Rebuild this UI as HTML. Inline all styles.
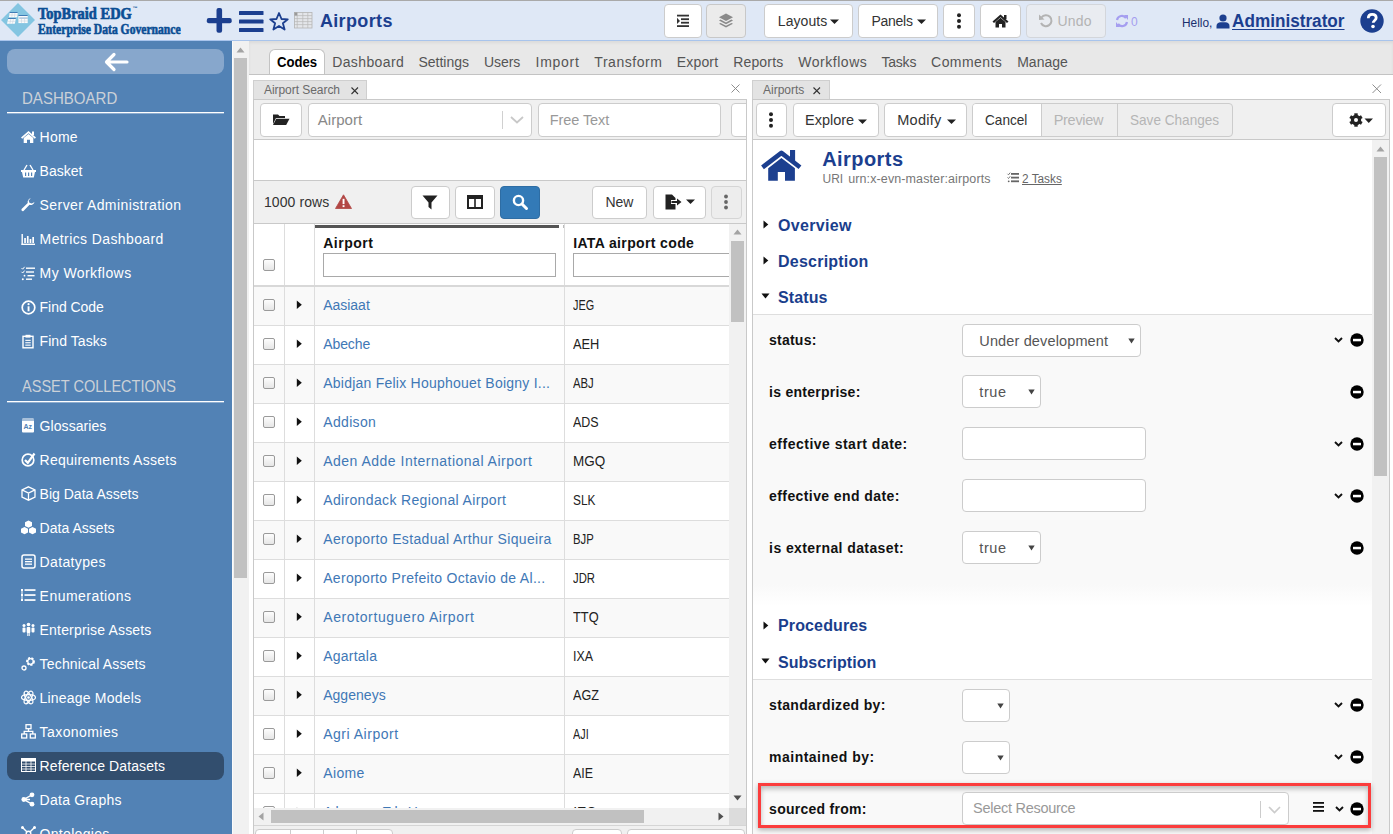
<!DOCTYPE html>
<html><head><meta charset="utf-8"><title>TopBraid EDG</title>
<style>
html,body{margin:0;padding:0;}
body{width:1393px;height:834px;overflow:hidden;position:relative;background:#fff;font-family:"Liberation Sans",sans-serif;}
svg{display:block;overflow:visible}
</style></head><body>
<div style="position:absolute;left:0px;top:0px;width:1393px;height:1px;background:#a9a9a9"></div>
<div style="position:absolute;left:0px;top:1px;width:1393px;height:39px;background:#dfe8f6"></div>
<div style="position:absolute;left:0px;top:40px;width:1393px;height:1px;background:#a8c4ec"></div>
<svg style="position:absolute;left:1px;top:3px;" width="34" height="34" viewBox="0 0 34 34"><polygon points="17,0 34,17 17,34 0,17" fill="#84c5e1"/><g fill="#fbfbfb"><polygon points="8.7,9.4 16.7,9.4 16.2,14.2 7.9,14.2"/><polygon points="7.2,15.5 14.9,15.5 13.8,20.8 6,20.8"/><rect x="17.4" y="12.3" width="9.3" height="7.8"/></g><g fill="#3f7bb5"><polygon points="8.7,9 16.7,9 16.65,9.9 8.6,9.9"/><polygon points="7.2,15.1 14.9,15.1 14.8,16 7.1,16"/><rect x="17.4" y="12" width="9.3" height="1"/><rect x="18.2" y="14.6" width="8.5" height="0.9" opacity="0.7"/></g><g stroke="#b9c9d8" stroke-width="0.45"><line x1="8.3" y1="12" x2="16.4" y2="12"/><line x1="11.2" y1="9.9" x2="10.8" y2="14.2"/><line x1="13.9" y1="9.9" x2="13.5" y2="14.2"/><line x1="6.6" y1="18.3" x2="14.3" y2="18.3"/><line x1="9.8" y1="16" x2="8.8" y2="20.8"/><line x1="12.4" y1="16" x2="11.4" y2="20.8"/><line x1="17.4" y1="18" x2="26.7" y2="18"/><line x1="20.5" y1="15.5" x2="20.5" y2="20.1"/><line x1="23.6" y1="15.5" x2="23.6" y2="20.1"/></g></svg>
<div style="position:absolute;left:37.5px;top:5.11px;font-size:17px;line-height:17px;color:#0b4e94;font-weight:bold;white-space:nowrap;font-family:'Liberation Serif',sans-serif;transform:scaleX(0.85);transform-origin:0 0;-webkit-text-stroke:0.7px #0b4e94;">TopBraid EDG</div>
<div style="position:absolute;left:132.5px;top:6.27px;font-size:5px;line-height:5px;color:#0b4e94;font-weight:bold;white-space:nowrap;font-family:'Liberation Sans',sans-serif;">™</div>
<div style="position:absolute;left:37.5px;top:22.95px;font-size:14px;line-height:14px;color:#0b4e94;font-weight:bold;white-space:nowrap;font-family:'Liberation Serif',sans-serif;transform:scaleX(0.83);transform-origin:0 0;-webkit-text-stroke:0.6px #0b4e94;">Enterprise Data Governance</div>
<svg style="position:absolute;left:206px;top:8px;" width="26" height="26" viewBox="0 0 26 26"><g fill="#1c3f8f"><rect x="10.5" y="0" width="5.6" height="24.7" rx="2"/><rect x="0.8" y="9.9" width="24.9" height="5.3" rx="2"/></g></svg>
<svg style="position:absolute;left:238px;top:10px;" width="26" height="24" viewBox="0 0 26 24"><g fill="#1c3f8f"><rect x="1" y="1" width="24.5" height="4" rx="0.6"/><rect x="1" y="9.6" width="24.5" height="4" rx="0.6"/><rect x="1" y="18.1" width="24.5" height="4" rx="0.6"/></g></svg>
<svg style="position:absolute;left:269px;top:12px;" width="20" height="19" viewBox="0 0 20 19"><polygon points="10,1 12.5,7 18.8,7.3 13.9,11.3 15.6,17.6 10,14 4.4,17.6 6.1,11.3 1.2,7.3 7.5,7" fill="none" stroke="#1c3f8f" stroke-width="1.8" stroke-linejoin="round"/></svg>
<svg style="position:absolute;left:294px;top:12px;" width="19" height="17" viewBox="0 0 19 17"><rect x="0.5" y="0.5" width="17.5" height="15.5" fill="#e4e6ea" stroke="#b4b4b4" stroke-width="0.8"/><g stroke="#b8b8b8" stroke-width="0.7"><line x1="0" y1="3.6" x2="18" y2="3.6"/><line x1="0" y1="6.6" x2="18" y2="6.6"/><line x1="0" y1="9.6" x2="18" y2="9.6"/><line x1="0" y1="12.6" x2="18" y2="12.6"/><line x1="3.2" y1="0" x2="3.2" y2="16"/><line x1="8.8" y1="0" x2="8.8" y2="16"/><line x1="13.8" y1="0" x2="13.8" y2="16"/></g><rect x="0.5" y="0.5" width="2.7" height="3" fill="#999"/></svg>
<div style="position:absolute;left:319.9px;top:12.06px;font-size:18px;line-height:18px;color:#1c3f8f;font-weight:bold;white-space:nowrap;font-family:'Liberation Sans',sans-serif;letter-spacing:0.357px;">Airports</div>
<div style="position:absolute;left:664px;top:4px;width:36px;height:32px;background:#fff;border:1px solid #ccc;border-radius:4px;"></div>
<svg style="position:absolute;left:676px;top:14px;" width="14" height="13" viewBox="0 0 14 13"><g fill="#333"><rect x="1" y="0.7" width="12" height="1.8"/><rect x="5" y="4.3" width="8" height="1.8"/><rect x="5" y="7.8" width="8" height="1.8"/><rect x="1" y="11.2" width="12" height="1.8"/><polygon points="1,3.8 4,6.9 1,10"/></g></svg>
<div style="position:absolute;left:706px;top:4px;width:38px;height:32px;background:#ebebeb;border:1px solid #c8c8c8;border-radius:4px;"></div>
<svg style="position:absolute;left:718px;top:13px;" width="16" height="16" viewBox="0 0 16 16"><g fill="#8a8a8a"><polygon points="8,0.5 15,4.2 8,7.9 1,4.2"/><path d="M2.6 6.6 L8 9.4 L13.4 6.6 L15 7.5 L8 11.2 L1 7.5 Z"/><path d="M2.6 9.9 L8 12.7 L13.4 9.9 L15 10.8 L8 14.5 L1 10.8 Z"/></g></svg>
<div style="position:absolute;left:764px;top:4px;width:87px;height:32px;background:#fff;border:1px solid #ccc;border-radius:4px;"></div>
<div style="position:absolute;left:777.8px;top:14.15px;font-size:14px;line-height:14px;color:#333;font-weight:normal;white-space:nowrap;font-family:'Liberation Sans',sans-serif;letter-spacing:0.083px;">Layouts</div>
<svg style="position:absolute;left:830px;top:19px;" width="10" height="6" viewBox="0 0 10 6"><polygon points="0,0.5 9,0.5 4.5,5" fill="#222"/></svg>
<div style="position:absolute;left:858px;top:4px;width:78px;height:32px;background:#fff;border:1px solid #ccc;border-radius:4px;"></div>
<div style="position:absolute;left:871.5px;top:14.15px;font-size:14px;line-height:14px;color:#333;font-weight:normal;white-space:nowrap;font-family:'Liberation Sans',sans-serif;letter-spacing:-0.280px;">Panels</div>
<svg style="position:absolute;left:917px;top:19px;" width="10" height="6" viewBox="0 0 10 6"><polygon points="0,0.5 9,0.5 4.5,5" fill="#222"/></svg>
<div style="position:absolute;left:943px;top:4px;width:30px;height:32px;background:#fff;border:1px solid #ccc;border-radius:4px;"></div>
<svg style="position:absolute;left:954px;top:13px;" width="10" height="16" viewBox="0 0 10 16"><g fill="#222"><circle cx="5" cy="2.3" r="2"/><circle cx="5" cy="8" r="2"/><circle cx="5" cy="13.7" r="2"/></g></svg>
<div style="position:absolute;left:980px;top:4px;width:39px;height:32px;background:#fff;border:1px solid #ccc;border-radius:4px;"></div>
<svg style="position:absolute;left:992px;top:14px;" width="17" height="14" viewBox="0 0 17 14"><g fill="#222"><polygon points="8.5,0.5 16.5,7.5 15,9 8.5,3.3 2,9 0.5,7.5"/><rect x="12" y="1" width="2.5" height="4"/><path d="M3.5 8 L8.5 3.8 L13.5 8 V13.5 H10 V10 H7 V13.5 H3.5 Z"/></g></svg>
<div style="position:absolute;left:1026px;top:4px;width:78px;height:32px;background:#e9ecf1;border:1px solid #d3d6db;border-radius:4px;"></div>
<svg style="position:absolute;left:1038px;top:13px;" width="15" height="15" viewBox="0 0 15 15"><path d="M3.5 4.5 A5.5 5.5 0 1 1 3 10" fill="none" stroke="#b3b3b3" stroke-width="2"/><polygon points="1,1.5 6.5,6.5 1,7" fill="#b3b3b3"/></svg>
<div style="position:absolute;left:1057.6px;top:14.15px;font-size:14px;line-height:14px;color:#b3b3b3;font-weight:normal;white-space:nowrap;font-family:'Liberation Sans',sans-serif;letter-spacing:0.167px;">Undo</div>
<svg style="position:absolute;left:1115px;top:14px;" width="14" height="14" viewBox="0 0 14 14"><g fill="none" stroke="#a59ef0" stroke-width="2.2"><path d="M2 6 A5 5 0 0 1 11 4"/><path d="M12 8 A5 5 0 0 1 3 10"/></g><g fill="#a59ef0"><polygon points="9,1 13,1 13,6"/><polygon points="1,8 5,13 1,13"/></g></svg>
<div style="position:absolute;left:1131px;top:16.34px;font-size:12px;line-height:12px;color:#a59ef0;font-weight:normal;white-space:nowrap;font-family:'Liberation Sans',sans-serif;">0</div>
<div style="position:absolute;left:1182.2px;top:15.50px;font-size:13px;line-height:13px;color:#1a2f6e;font-weight:normal;white-space:nowrap;font-family:'Liberation Sans',sans-serif;transform:scaleX(0.9152);transform-origin:0 0;">Hello,</div>
<svg style="position:absolute;left:1216px;top:14px;" width="14" height="15" viewBox="0 0 14 15"><g fill="#1c3f8f"><circle cx="7" cy="4" r="3.6"/><path d="M0.5 14.5 V12 C0.5 9.5 2.5 8.3 4.5 8.3 H9.5 C11.5 8.3 13.5 9.5 13.5 12 V14.5 Z"/></g></svg>
<div style="position:absolute;left:1232.0px;top:11.76px;font-size:18px;line-height:18px;color:#1c3f8f;font-weight:bold;white-space:nowrap;font-family:'Liberation Sans',sans-serif;transform:scaleX(0.9534);transform-origin:0 0;text-decoration:underline;text-underline-offset:1.5px;text-decoration-thickness:1.3px;">Administrator</div>
<svg style="position:absolute;left:1360px;top:9px;" width="24" height="24" viewBox="0 0 24 24"><circle cx="12" cy="12" r="11.7" fill="#1c3f8f"/><path d="M8.3 9.2 C8.3 6.5 10 5.3 12.2 5.3 C14.6 5.3 16.2 6.8 16.2 8.8 C16.2 11.5 13.2 11.5 13.2 13.8" fill="none" stroke="#fff" stroke-width="2.8"/><circle cx="13" cy="17.5" r="1.8" fill="#fff"/></svg>
<div style="position:absolute;left:0px;top:41px;width:232px;height:793px;background:#5282b5"></div>
<div style="position:absolute;left:7px;top:49px;width:217px;height:25px;background:#87a7cc;border-radius:8px"></div>
<svg style="position:absolute;left:103px;top:52px;" width="26" height="20" viewBox="0 0 26 20"><path d="M24 10 H4 M11 2.5 L3.5 10 L11 17.5" fill="none" stroke="#fff" stroke-width="3.2" stroke-linecap="round" stroke-linejoin="round"/></svg>
<div style="position:absolute;left:22px;top:89.61px;font-size:17px;line-height:17px;color:#cbd1d8;font-weight:normal;white-space:nowrap;font-family:'Liberation Sans',sans-serif;transform:scaleX(0.885);transform-origin:0 0;">DASHBOARD</div>
<div style="position:absolute;left:7px;top:112px;width:217px;height:1px;background:#fff"></div>
<div style="position:absolute;left:7px;top:113px;width:217px;height:1px;background:rgba(255,255,255,0.35)"></div>
<svg style="position:absolute;left:21.2px;top:129.7px;" width="15" height="15" viewBox="0 0 15 15"><g fill="#fff"><polygon points="7.5,1 15,7.5 13.8,8.7 7.5,3.3 1.2,8.7 0,7.5"/><rect x="11" y="1.5" width="2" height="3.5"/><path d="M2.7 8 L7.5 4 L12.3 8 V13 H9 V9.8 H6 V13 H2.7 Z"/></g></svg>
<div style="position:absolute;left:39.6px;top:130.15px;font-size:14px;line-height:14px;color:#fff;font-weight:normal;white-space:nowrap;font-family:'Liberation Sans',sans-serif;letter-spacing:0.233px;">Home</div>
<svg style="position:absolute;left:21.2px;top:163.7px;" width="15" height="15" viewBox="0 0 15 15"><g fill="#fff"><path d="M0 6 H15 V8 H14 L12.8 13.5 H2.2 L1 8 H0 Z"/><path d="M3 6 L6 1 M12 6 L9 1" stroke="#fff" stroke-width="1.4"/></g><g fill="#5282b5"><rect x="4" y="8.5" width="1.2" height="3.5"/><rect x="7" y="8.5" width="1.2" height="3.5"/><rect x="10" y="8.5" width="1.2" height="3.5"/></g></svg>
<div style="position:absolute;left:39.6px;top:164.15px;font-size:14px;line-height:14px;color:#fff;font-weight:normal;white-space:nowrap;font-family:'Liberation Sans',sans-serif;letter-spacing:-0.000px;">Basket</div>
<svg style="position:absolute;left:21.2px;top:197.7px;" width="15" height="15" viewBox="0 0 15 15"><path d="M13.5 4 A4 4 0 0 1 8.5 6.8 L2.5 13 A1.4 1.4 0 0 1 0.6 11.1 L6.7 5 A4 4 0 0 1 9.8 0.2 L7.6 2.5 L8.4 4.8 L10.8 5.6 Z" fill="#fff"/></svg>
<div style="position:absolute;left:39.6px;top:198.15px;font-size:14px;line-height:14px;color:#fff;font-weight:normal;white-space:nowrap;font-family:'Liberation Sans',sans-serif;letter-spacing:0.420px;">Server Administration</div>
<svg style="position:absolute;left:21.2px;top:231.7px;" width="15" height="15" viewBox="0 0 15 15"><g fill="#fff"><rect x="0.5" y="2" width="1.4" height="11"/><rect x="0.5" y="11.6" width="13.5" height="1.4"/><rect x="3.2" y="6" width="1.7" height="5"/><rect x="5.9" y="4" width="1.7" height="7"/><rect x="8.6" y="7" width="1.7" height="4"/><rect x="11.3" y="5" width="1.7" height="6"/></g></svg>
<div style="position:absolute;left:39.6px;top:232.15px;font-size:14px;line-height:14px;color:#fff;font-weight:normal;white-space:nowrap;font-family:'Liberation Sans',sans-serif;letter-spacing:0.394px;">Metrics Dashboard</div>
<svg style="position:absolute;left:21.2px;top:265.7px;" width="15" height="15" viewBox="0 0 15 15"><g fill="#fff"><rect x="5" y="1.5" width="9" height="1.4"/><rect x="5" y="5.3" width="8" height="1.4"/><rect x="6.5" y="9" width="7" height="1.4"/><rect x="5" y="12.5" width="6" height="1.4"/><circle cx="1.8" cy="13.2" r="1"/><circle cx="3.5" cy="9.7" r="0.9"/></g><path d="M0.5 2 L1.7 3.2 L3.6 0.8 M0.5 5.8 L1.7 7 L3.6 4.6" fill="none" stroke="#fff" stroke-width="1"/></svg>
<div style="position:absolute;left:39.6px;top:266.15px;font-size:14px;line-height:14px;color:#fff;font-weight:normal;white-space:nowrap;font-family:'Liberation Sans',sans-serif;letter-spacing:0.427px;">My Workflows</div>
<svg style="position:absolute;left:21.2px;top:299.7px;" width="15" height="15" viewBox="0 0 15 15"><circle cx="7.5" cy="7.5" r="6.3" fill="none" stroke="#fff" stroke-width="1.7"/><rect x="6.6" y="6.3" width="1.9" height="5" fill="#fff"/><circle cx="7.55" cy="4.2" r="1.1" fill="#fff"/></svg>
<div style="position:absolute;left:39.6px;top:300.15px;font-size:14px;line-height:14px;color:#fff;font-weight:normal;white-space:nowrap;font-family:'Liberation Sans',sans-serif;letter-spacing:-0.050px;">Find Code</div>
<svg style="position:absolute;left:21.2px;top:333.7px;" width="15" height="15" viewBox="0 0 15 15"><rect x="2" y="2.3" width="10" height="11.5" fill="none" stroke="#fff" stroke-width="1.4"/><rect x="4.5" y="0.8" width="5" height="2.8" fill="#fff"/><g fill="#fff"><rect x="4.3" y="5.8" width="5.4" height="1.1"/><rect x="4.3" y="8.2" width="5.4" height="1.1"/><rect x="4.3" y="10.6" width="5.4" height="1.1"/></g></svg>
<div style="position:absolute;left:39.6px;top:334.15px;font-size:14px;line-height:14px;color:#fff;font-weight:normal;white-space:nowrap;font-family:'Liberation Sans',sans-serif;letter-spacing:0.056px;">Find Tasks</div>
<div style="position:absolute;left:21.5px;top:378.31px;font-size:17px;line-height:17px;color:#cbd1d8;font-weight:normal;white-space:nowrap;font-family:'Liberation Sans',sans-serif;transform:scaleX(0.855);transform-origin:0 0;">ASSET COLLECTIONS</div>
<div style="position:absolute;left:7px;top:401px;width:217px;height:1px;background:#fff"></div>
<div style="position:absolute;left:7px;top:402px;width:217px;height:1px;background:rgba(255,255,255,0.35)"></div>
<div style="position:absolute;left:7px;top:752px;width:217px;height:28px;background:#324e6e;border-radius:8px"></div>
<svg style="position:absolute;left:21.2px;top:418.3px;" width="15" height="15" viewBox="0 0 15 15"><rect x="1" y="0.5" width="12" height="14" rx="1" fill="#fff"/><rect x="1" y="1.5" width="12" height="1" fill="#5282b5"/><text x="2.5" y="11" font-size="7" font-family="Liberation Sans" fill="#5282b5" font-weight="bold">Az</text></svg>
<div style="position:absolute;left:39.6px;top:418.75px;font-size:14px;line-height:14px;color:#fff;font-weight:normal;white-space:nowrap;font-family:'Liberation Sans',sans-serif;letter-spacing:0.067px;">Glossaries</div>
<svg style="position:absolute;left:21.2px;top:452.3px;" width="15" height="15" viewBox="0 0 15 15"><circle cx="7" cy="8" r="5.8" fill="none" stroke="#fff" stroke-width="1.7"/><path d="M4 8 L6.8 10.8 L13.5 1.5" fill="none" stroke="#fff" stroke-width="2.2"/></svg>
<div style="position:absolute;left:39.6px;top:452.75px;font-size:14px;line-height:14px;color:#fff;font-weight:normal;white-space:nowrap;font-family:'Liberation Sans',sans-serif;letter-spacing:0.250px;">Requirements Assets</div>
<svg style="position:absolute;left:21.2px;top:486.3px;" width="15" height="15" viewBox="0 0 15 15"><path d="M7.5 0.8 L14 3.8 V11 L7.5 14.2 L1 11 V3.8 Z M1 3.8 L7.5 7 L14 3.8 M7.5 7 V14.2" fill="none" stroke="#fff" stroke-width="1.3"/></svg>
<div style="position:absolute;left:39.6px;top:486.75px;font-size:14px;line-height:14px;color:#fff;font-weight:normal;white-space:nowrap;font-family:'Liberation Sans',sans-serif;letter-spacing:0.007px;">Big Data Assets</div>
<svg style="position:absolute;left:21.2px;top:520.3000000000001px;" width="15" height="15" viewBox="0 0 15 15"><g fill="#fff"><polygon points="7.5,0.5 11,2.2 11,6 7.5,7.7 4,6 4,2.2"/><polygon points="3.5,7 7,8.7 7,12.5 3.5,14.2 0,12.5 0,8.7"/><polygon points="11.5,7 15,8.7 15,12.5 11.5,14.2 8,12.5 8,8.7"/></g></svg>
<div style="position:absolute;left:39.6px;top:520.75px;font-size:14px;line-height:14px;color:#fff;font-weight:normal;white-space:nowrap;font-family:'Liberation Sans',sans-serif;letter-spacing:0.030px;">Data Assets</div>
<svg style="position:absolute;left:21.2px;top:554.3000000000001px;" width="15" height="15" viewBox="0 0 15 15"><rect x="1" y="1" width="13" height="13" rx="2" fill="none" stroke="#fff" stroke-width="1.5"/><g fill="#fff"><rect x="4" y="4.5" width="7" height="1.3"/><rect x="4" y="7" width="7" height="1.3"/><rect x="4" y="9.5" width="7" height="1.3"/></g></svg>
<div style="position:absolute;left:39.6px;top:554.75px;font-size:14px;line-height:14px;color:#fff;font-weight:normal;white-space:nowrap;font-family:'Liberation Sans',sans-serif;letter-spacing:0.350px;">Datatypes</div>
<svg style="position:absolute;left:21.2px;top:588.3000000000001px;" width="15" height="15" viewBox="0 0 15 15"><g fill="#fff"><rect x="0" y="1" width="2" height="2"/><rect x="0" y="6" width="2" height="2"/><rect x="0" y="11" width="2" height="2"/><rect x="3.5" y="1.2" width="11" height="1.7"/><rect x="3.5" y="6.2" width="11" height="1.7"/><rect x="3.5" y="11.2" width="11" height="1.7"/><rect x="0.5" y="3" width="1" height="8"/></g></svg>
<div style="position:absolute;left:39.6px;top:588.75px;font-size:14px;line-height:14px;color:#fff;font-weight:normal;white-space:nowrap;font-family:'Liberation Sans',sans-serif;letter-spacing:0.464px;">Enumerations</div>
<svg style="position:absolute;left:21.2px;top:622.3000000000001px;" width="15" height="15" viewBox="0 0 15 15"><g fill="#fff"><circle cx="7.5" cy="2.5" r="1.8"/><circle cx="3" cy="3.5" r="1.5"/><circle cx="12" cy="3.5" r="1.5"/><rect x="5.7" y="5" width="3.6" height="6" rx="1"/><rect x="1.5" y="5.5" width="3" height="5" rx="1"/><rect x="10.5" y="5.5" width="3" height="5" rx="1"/><rect x="6.3" y="10" width="1" height="4"/><rect x="7.7" y="10" width="1" height="4"/></g></svg>
<div style="position:absolute;left:39.6px;top:622.75px;font-size:14px;line-height:14px;color:#fff;font-weight:normal;white-space:nowrap;font-family:'Liberation Sans',sans-serif;letter-spacing:0.175px;">Enterprise Assets</div>
<svg style="position:absolute;left:21.2px;top:656.3000000000001px;" width="15" height="15" viewBox="0 0 15 15"><circle cx="9.5" cy="5.5" r="3.3" fill="none" stroke="#fff" stroke-width="2.2" stroke-dasharray="2 1.2"/><circle cx="9.5" cy="5.5" r="2.8" fill="none" stroke="#fff" stroke-width="1.2"/><circle cx="3" cy="12" r="2" fill="none" stroke="#fff" stroke-width="1.3"/></svg>
<div style="position:absolute;left:39.6px;top:656.75px;font-size:14px;line-height:14px;color:#fff;font-weight:normal;white-space:nowrap;font-family:'Liberation Sans',sans-serif;letter-spacing:0.167px;">Technical Assets</div>
<svg style="position:absolute;left:21.2px;top:690.3000000000001px;" width="15" height="15" viewBox="0 0 15 15"><g fill="none" stroke="#fff" stroke-width="1.2"><ellipse cx="7.5" cy="7.5" rx="7" ry="2.8"/><ellipse cx="7.5" cy="7.5" rx="7" ry="2.8" transform="rotate(60 7.5 7.5)"/><ellipse cx="7.5" cy="7.5" rx="7" ry="2.8" transform="rotate(-60 7.5 7.5)"/></g><circle cx="7.5" cy="7.5" r="1.3" fill="#fff"/></svg>
<div style="position:absolute;left:39.6px;top:690.75px;font-size:14px;line-height:14px;color:#fff;font-weight:normal;white-space:nowrap;font-family:'Liberation Sans',sans-serif;letter-spacing:0.192px;">Lineage Models</div>
<svg style="position:absolute;left:21.2px;top:724.3000000000001px;" width="15" height="15" viewBox="0 0 15 15"><g fill="none" stroke="#fff" stroke-width="1.3"><rect x="5" y="0.7" width="5" height="4"/><rect x="0.7" y="10" width="5" height="4"/><rect x="9.3" y="10" width="5" height="4"/><path d="M7.5 4.7 V7.3 H3.2 V10 M7.5 7.3 H11.8 V10"/></g></svg>
<div style="position:absolute;left:39.6px;top:724.75px;font-size:14px;line-height:14px;color:#fff;font-weight:normal;white-space:nowrap;font-family:'Liberation Sans',sans-serif;letter-spacing:0.422px;">Taxonomies</div>
<svg style="position:absolute;left:21.2px;top:758.3000000000001px;" width="15" height="15" viewBox="0 0 15 15"><rect x="0.5" y="0.5" width="14" height="13" fill="none" stroke="#fff" stroke-width="1"/><rect x="0.5" y="0.5" width="14" height="3" fill="#fff"/><g stroke="#fff" stroke-width="0.8"><line x1="0" y1="6" x2="15" y2="6"/><line x1="0" y1="8.5" x2="15" y2="8.5"/><line x1="0" y1="11" x2="15" y2="11"/><line x1="5" y1="0" x2="5" y2="14"/><line x1="10" y1="0" x2="10" y2="14"/></g></svg>
<div style="position:absolute;left:39.6px;top:758.75px;font-size:14px;line-height:14px;color:#fff;font-weight:normal;white-space:nowrap;font-family:'Liberation Sans',sans-serif;letter-spacing:0.100px;">Reference Datasets</div>
<svg style="position:absolute;left:21.2px;top:792.3000000000001px;" width="15" height="15" viewBox="0 0 15 15"><g fill="#fff"><circle cx="11" cy="2.8" r="2.4"/><circle cx="2.8" cy="7.5" r="2.4"/><circle cx="11" cy="12.2" r="2.4"/></g><path d="M11 2.8 L2.8 7.5 L11 12.2 M2.8 7.5 H9" stroke="#fff" stroke-width="1.4" fill="none"/></svg>
<div style="position:absolute;left:39.6px;top:792.75px;font-size:14px;line-height:14px;color:#fff;font-weight:normal;white-space:nowrap;font-family:'Liberation Sans',sans-serif;letter-spacing:0.250px;">Data Graphs</div>
<svg style="position:absolute;left:21.2px;top:826.3000000000001px;" width="15" height="15" viewBox="0 0 15 15"><g fill="none" stroke="#fff" stroke-width="1.4"><circle cx="7.5" cy="7.5" r="2.3"/><path d="M1 1 L5.8 5.8 M14 1 L9.2 5.8 M1 14 L5.8 9.2 M14 14 L9.2 9.2"/></g><g fill="#fff"><circle cx="1.5" cy="1.5" r="1.5"/><circle cx="13.5" cy="1.5" r="1.5"/></g></svg>
<div style="position:absolute;left:39.6px;top:826.75px;font-size:14px;line-height:14px;color:#fff;font-weight:normal;white-space:nowrap;font-family:'Liberation Sans',sans-serif;letter-spacing:0.300px;">Ontologies</div>
<div style="position:absolute;left:232px;top:41px;width:17px;height:793px;background:#f1f1f1"></div>
<div style="position:absolute;left:232px;top:41px;width:1px;height:793px;background:#fbfbfb"></div>
<svg style="position:absolute;left:236px;top:47px;" width="9" height="6" viewBox="0 0 9 6"><polygon points="0.5,5.5 4.5,0.5 8.5,5.5" fill="#a3a3a3"/></svg>
<div style="position:absolute;left:234px;top:58px;width:13px;height:520px;background:#c1c1c1"></div>
<div style="position:absolute;left:249px;top:41px;width:1144px;height:33px;background:#e8e8e8;box-shadow:inset 0 2px 3px rgba(0,0,0,0.06)"></div>
<div style="position:absolute;left:249px;top:74px;width:1144px;height:1px;background:#c3c3c3"></div>
<div style="position:absolute;left:269px;top:49px;width:54px;height:24px;background:#fff;border:1px solid #c3c3c3;border-bottom:none;border-radius:6px 6px 0 0"></div>
<div style="position:absolute;left:276.9px;top:55.15px;font-size:14px;line-height:14px;color:#000;font-weight:bold;white-space:nowrap;font-family:'Liberation Sans',sans-serif;transform:scaleX(0.9372);transform-origin:0 0;">Codes</div>
<div style="position:absolute;left:332.2px;top:55.15px;font-size:14px;line-height:14px;color:#555;font-weight:normal;white-space:nowrap;font-family:'Liberation Sans',sans-serif;letter-spacing:0.388px;">Dashboard</div>
<div style="position:absolute;left:418.4px;top:55.15px;font-size:14px;line-height:14px;color:#555;font-weight:normal;white-space:nowrap;font-family:'Liberation Sans',sans-serif;letter-spacing:0.000px;">Settings</div>
<div style="position:absolute;left:484px;top:55.15px;font-size:14px;line-height:14px;color:#555;font-weight:normal;white-space:nowrap;font-family:'Liberation Sans',sans-serif;letter-spacing:-0.075px;">Users</div>
<div style="position:absolute;left:535.5px;top:55.15px;font-size:14px;line-height:14px;color:#555;font-weight:normal;white-space:nowrap;font-family:'Liberation Sans',sans-serif;letter-spacing:0.740px;">Import</div>
<div style="position:absolute;left:594.3px;top:55.15px;font-size:14px;line-height:14px;color:#555;font-weight:normal;white-space:nowrap;font-family:'Liberation Sans',sans-serif;letter-spacing:0.550px;">Transform</div>
<div style="position:absolute;left:676.8px;top:55.15px;font-size:14px;line-height:14px;color:#555;font-weight:normal;white-space:nowrap;font-family:'Liberation Sans',sans-serif;letter-spacing:0.160px;">Export</div>
<div style="position:absolute;left:733.2px;top:55.15px;font-size:14px;line-height:14px;color:#555;font-weight:normal;white-space:nowrap;font-family:'Liberation Sans',sans-serif;letter-spacing:0.167px;">Reports</div>
<div style="position:absolute;left:798.2px;top:55.15px;font-size:14px;line-height:14px;color:#555;font-weight:normal;white-space:nowrap;font-family:'Liberation Sans',sans-serif;letter-spacing:0.537px;">Workflows</div>
<div style="position:absolute;left:881.5px;top:55.15px;font-size:14px;line-height:14px;color:#555;font-weight:normal;white-space:nowrap;font-family:'Liberation Sans',sans-serif;letter-spacing:-0.225px;">Tasks</div>
<div style="position:absolute;left:931.1px;top:55.15px;font-size:14px;line-height:14px;color:#555;font-weight:normal;white-space:nowrap;font-family:'Liberation Sans',sans-serif;letter-spacing:0.429px;">Comments</div>
<div style="position:absolute;left:1017.2px;top:55.15px;font-size:14px;line-height:14px;color:#555;font-weight:normal;white-space:nowrap;font-family:'Liberation Sans',sans-serif;letter-spacing:0.020px;">Manage</div>
<svg style="position:absolute;left:731px;top:84px;" width="9" height="9" viewBox="0 0 9 9"><path d="M0.5 0.5 L8.5 8.5 M8.5 0.5 L0.5 8.5" stroke="#888" stroke-width="0.95"/></svg>
<div style="position:absolute;left:253px;top:80px;width:113px;height:20px;background:#e3e3e3;border:1px solid #cfcfcf;border-bottom:none;box-sizing:border-box;width:114px"></div>
<div style="position:absolute;left:264px;top:83.64px;font-size:12px;line-height:12px;color:#6a6a6a;font-weight:normal;white-space:nowrap;font-family:'Liberation Sans',sans-serif;letter-spacing:-0.054px;">Airport Search</div>
<svg style="position:absolute;left:350.5px;top:87px;" width="7.5" height="7.5" viewBox="0 0 7.5 7.5"><path d="M0.5 0.5 L7.0 7.0 M7.0 0.5 L0.5 7.0" stroke="#333" stroke-width="1.1"/></svg>
<div style="position:absolute;left:253px;top:99px;width:494px;height:735px;border-left:1px solid #c9c9c9;border-right:1px solid #c9c9c9;box-sizing:border-box"></div>
<div style="position:absolute;left:254px;top:99px;width:492px;height:41px;background:#f0f0f0;border-top:1px solid #c9c9c9;border-bottom:1px solid #c9c9c9;box-sizing:border-box"></div>
<div style="position:absolute;left:260px;top:103px;width:40px;height:32px;background:#fff;border:1px solid #ccc;border-radius:4px;"></div>
<svg style="position:absolute;left:272px;top:113px;" width="18" height="13" viewBox="0 0 18 13"><path d="M1 1.5 H6 L7.5 3 H13 V5 H4 L1 11 Z" fill="#222"/><path d="M4.2 5.8 H17.5 L14.2 12 H1 Z" fill="#222"/></svg>
<div style="position:absolute;left:307.5px;top:103px;width:222.5px;height:32px;background:#fff;border:1px solid #ccc;border-radius:4px;"></div>
<div style="position:absolute;left:317.8px;top:112.30px;font-size:15px;line-height:15px;color:#888;font-weight:normal;white-space:nowrap;font-family:'Liberation Sans',sans-serif;letter-spacing:0.033px;">Airport</div>
<div style="position:absolute;left:502px;top:111px;width:1px;height:18px;background:#d0d0d0"></div>
<svg style="position:absolute;left:510px;top:116px;" width="14" height="8" viewBox="0 0 14 8"><path d="M1 1 L7 6.5 L13 1" fill="none" stroke="#c8c8c8" stroke-width="1.8"/></svg>
<div style="position:absolute;left:537.5px;top:103px;width:181.5px;height:32px;background:#fff;border:1px solid #ccc;border-radius:4px;"></div>
<div style="position:absolute;left:549.8px;top:112.73px;font-size:14.5px;line-height:14.5px;color:#999;font-weight:normal;white-space:nowrap;font-family:'Liberation Sans',sans-serif;letter-spacing:-0.100px;">Free Text</div>
<div style="position:absolute;left:731px;top:103px;width:27px;height:32px;background:#fff;border:1px solid #ccc;border-radius:4px;"></div>
<div style="position:absolute;left:746px;top:99px;width:6px;height:50px;background:#fff"></div>
<div style="position:absolute;left:746px;top:99px;width:1px;height:735px;background:#c9c9c9"></div>
<div style="position:absolute;left:254px;top:180px;width:492px;height:44px;background:#f0f0f0;border-top:1px solid #c9c9c9;border-bottom:1px solid #c9c9c9;box-sizing:border-box"></div>
<div style="position:absolute;left:264px;top:194.95px;font-size:14px;line-height:14px;color:#333;font-weight:normal;white-space:nowrap;font-family:'Liberation Sans',sans-serif;letter-spacing:0.087px;">1000 rows</div>
<svg style="position:absolute;left:335px;top:194px;" width="17" height="15" viewBox="0 0 17 15"><path d="M8.5 0.8 L16.5 14.5 H0.5 Z" fill="#b24745" stroke="#b24745" stroke-width="0.8" stroke-linejoin="round"/><rect x="7.6" y="4.8" width="1.9" height="5.3" fill="#fff"/><rect x="7.6" y="11.2" width="1.9" height="1.9" fill="#fff"/></svg>
<div style="position:absolute;left:410.5px;top:185.5px;width:37.5px;height:31.5px;background:#fff;border:1px solid #ccc;border-radius:4px;"></div>
<svg style="position:absolute;left:422px;top:195px;" width="16" height="15" viewBox="0 0 16 15"><path d="M0.5 0.5 H15.5 L9.5 7.5 V14.5 L6.5 12 V7.5 Z" fill="#222"/></svg>
<div style="position:absolute;left:455.3px;top:185.5px;width:37.69999999999999px;height:31.5px;background:#fff;border:1px solid #ccc;border-radius:4px;"></div>
<svg style="position:absolute;left:467px;top:195px;" width="16" height="14" viewBox="0 0 16 14"><rect x="1" y="1" width="14" height="12" fill="none" stroke="#222" stroke-width="2"/><rect x="1" y="1" width="14" height="3" fill="#222"/><rect x="7.2" y="1" width="1.6" height="12" fill="#222"/></svg>
<div style="position:absolute;left:500.3px;top:185.5px;width:37.69999999999999px;height:31.5px;background:#337ab7;border:1px solid #2e6da4;border-radius:4px;"></div>
<svg style="position:absolute;left:512px;top:194px;" width="16" height="16" viewBox="0 0 16 16"><circle cx="6.5" cy="6.5" r="4.6" fill="none" stroke="#fff" stroke-width="2.4"/><path d="M10 10 L14.5 14.5" stroke="#fff" stroke-width="3" stroke-linecap="round"/></svg>
<div style="position:absolute;left:592.4px;top:185.5px;width:52.60000000000002px;height:31.5px;background:#fff;border:1px solid #ccc;border-radius:4px;"></div>
<div style="position:absolute;left:605.6px;top:195.15px;font-size:14px;line-height:14px;color:#333;font-weight:normal;white-space:nowrap;font-family:'Liberation Sans',sans-serif;letter-spacing:-0.150px;">New</div>
<div style="position:absolute;left:652.5px;top:185.5px;width:51.5px;height:31.5px;background:#fff;border:1px solid #ccc;border-radius:4px;"></div>
<svg style="position:absolute;left:665px;top:194px;" width="18" height="16" viewBox="0 0 18 16"><path d="M0.5 0.5 H7 L10.5 4 V6 H6 V10 H10.5 V15.5 H0.5 Z" fill="#222"/><path d="M6.5 7 H12 V4.5 L16.5 8 L12 11.5 V9 H6.5 Z" fill="#222"/></svg>
<svg style="position:absolute;left:686px;top:199px;" width="10" height="6" viewBox="0 0 10 6"><polygon points="0,0.5 9,0.5 4.5,5" fill="#222"/></svg>
<div style="position:absolute;left:711.3px;top:185.5px;width:28.700000000000045px;height:31.5px;background:#ededed;border:1px solid #d5d5d5;border-radius:4px;"></div>
<svg style="position:absolute;left:722px;top:194px;" width="8" height="16" viewBox="0 0 8 16"><g fill="#666"><circle cx="4" cy="2.5" r="1.9"/><circle cx="4" cy="8" r="1.9"/><circle cx="4" cy="13.5" r="1.9"/></g></svg>
<div style="position:absolute;left:254px;top:224px;width:475px;height:584px;background:#fff;overflow:hidden"></div>
<div style="position:absolute;left:284px;top:224px;width:1px;height:62px;background:#dddddd"></div>
<div style="position:absolute;left:314px;top:224px;width:1px;height:62px;background:#dddddd"></div>
<div style="position:absolute;left:564px;top:224px;width:1px;height:62px;background:#dddddd"></div>
<div style="position:absolute;left:315px;top:225px;width:244px;height:3px;background:#555"></div>
<div style="position:absolute;left:563px;top:225px;width:1px;height:3px;background:#bbb"></div>
<div style="position:absolute;left:263px;top:259px;width:10px;height:10px;border:1px solid #9a9a9a;border-radius:2px;background:linear-gradient(#fdfdfd,#e6e6e6)"></div>
<div style="position:absolute;left:323.2px;top:236.15px;font-size:14px;line-height:14px;color:#111;font-weight:bold;white-space:nowrap;font-family:'Liberation Sans',sans-serif;letter-spacing:0.500px;">Airport</div>
<div style="position:absolute;left:323px;top:253px;width:231px;height:22px;border:1px solid #a9a9a9;background:#fff"></div>
<div style="position:absolute;left:573.2px;top:236.15px;font-size:14px;line-height:14px;color:#111;font-weight:bold;white-space:nowrap;font-family:'Liberation Sans',sans-serif;letter-spacing:0.362px;">IATA airport code</div>
<div style="position:absolute;left:573px;top:253px;width:160px;height:22px;border:1px solid #a9a9a9;background:#fff"></div>
<div style="position:absolute;left:254px;top:285px;width:475px;height:2px;background:#d8d8d8"></div>
<div style="position:absolute;left:254px;top:287px;width:475px;height:38px;background:#f9f9f9"></div>
<div style="position:absolute;left:254px;top:325px;width:475px;height:1px;background:#dddddd"></div>
<div style="position:absolute;left:284px;top:287px;width:1px;height:39px;background:#dddddd"></div>
<div style="position:absolute;left:314px;top:287px;width:1px;height:39px;background:#dddddd"></div>
<div style="position:absolute;left:564px;top:287px;width:1px;height:39px;background:#dddddd"></div>
<div style="position:absolute;left:254px;top:287px;width:475px;height:38px;overflow:hidden">
<div style="position:absolute;left:9px;top:12px;width:10px;height:10px;border:1px solid #9a9a9a;border-radius:2px;background:linear-gradient(#fdfdfd,#e6e6e6)"></div>
<svg style="position:absolute;left:42px;top:13px;" width="7" height="10" viewBox="0 0 7 10"><polygon points="0.8,0.5 5.8,4.8 0.8,9.1" fill="#111"/></svg>
<div style="position:absolute;left:69.19999999999999px;top:10.65px;font-size:14px;line-height:14px;color:#3f78b6;font-weight:normal;white-space:nowrap;font-family:'Liberation Sans',sans-serif;letter-spacing:-0.017px;">Aasiaat</div>
<div style="position:absolute;left:319.20000000000005px;top:10.65px;font-size:14px;line-height:14px;color:#222;font-weight:normal;white-space:nowrap;font-family:'Liberation Sans',sans-serif;transform:scaleX(0.7778);transform-origin:0 0;">JEG</div>
</div>
<div style="position:absolute;left:254px;top:326px;width:475px;height:38px;background:#fff"></div>
<div style="position:absolute;left:254px;top:364px;width:475px;height:1px;background:#dddddd"></div>
<div style="position:absolute;left:284px;top:326px;width:1px;height:39px;background:#dddddd"></div>
<div style="position:absolute;left:314px;top:326px;width:1px;height:39px;background:#dddddd"></div>
<div style="position:absolute;left:564px;top:326px;width:1px;height:39px;background:#dddddd"></div>
<div style="position:absolute;left:254px;top:326px;width:475px;height:38px;overflow:hidden">
<div style="position:absolute;left:9px;top:12px;width:10px;height:10px;border:1px solid #9a9a9a;border-radius:2px;background:linear-gradient(#fdfdfd,#e6e6e6)"></div>
<svg style="position:absolute;left:42px;top:13px;" width="7" height="10" viewBox="0 0 7 10"><polygon points="0.8,0.5 5.8,4.8 0.8,9.1" fill="#111"/></svg>
<div style="position:absolute;left:69.19999999999999px;top:10.65px;font-size:14px;line-height:14px;color:#3f78b6;font-weight:normal;white-space:nowrap;font-family:'Liberation Sans',sans-serif;letter-spacing:-0.080px;">Abeche</div>
<div style="position:absolute;left:319.20000000000005px;top:10.65px;font-size:14px;line-height:14px;color:#222;font-weight:normal;white-space:nowrap;font-family:'Liberation Sans',sans-serif;transform:scaleX(0.9138);transform-origin:0 0;">AEH</div>
</div>
<div style="position:absolute;left:254px;top:365px;width:475px;height:38px;background:#f9f9f9"></div>
<div style="position:absolute;left:254px;top:403px;width:475px;height:1px;background:#dddddd"></div>
<div style="position:absolute;left:284px;top:365px;width:1px;height:39px;background:#dddddd"></div>
<div style="position:absolute;left:314px;top:365px;width:1px;height:39px;background:#dddddd"></div>
<div style="position:absolute;left:564px;top:365px;width:1px;height:39px;background:#dddddd"></div>
<div style="position:absolute;left:254px;top:365px;width:475px;height:38px;overflow:hidden">
<div style="position:absolute;left:9px;top:12px;width:10px;height:10px;border:1px solid #9a9a9a;border-radius:2px;background:linear-gradient(#fdfdfd,#e6e6e6)"></div>
<svg style="position:absolute;left:42px;top:13px;" width="7" height="10" viewBox="0 0 7 10"><polygon points="0.8,0.5 5.8,4.8 0.8,9.1" fill="#111"/></svg>
<div style="position:absolute;left:69.19999999999999px;top:10.65px;font-size:14px;line-height:14px;color:#3f78b6;font-weight:normal;white-space:nowrap;font-family:'Liberation Sans',sans-serif;letter-spacing:0.238px;">Abidjan Felix Houphouet Boigny I...</div>
<div style="position:absolute;left:319.20000000000005px;top:10.65px;font-size:14px;line-height:14px;color:#222;font-weight:normal;white-space:nowrap;font-family:'Liberation Sans',sans-serif;transform:scaleX(0.8077);transform-origin:0 0;">ABJ</div>
</div>
<div style="position:absolute;left:254px;top:404px;width:475px;height:38px;background:#fff"></div>
<div style="position:absolute;left:254px;top:442px;width:475px;height:1px;background:#dddddd"></div>
<div style="position:absolute;left:284px;top:404px;width:1px;height:39px;background:#dddddd"></div>
<div style="position:absolute;left:314px;top:404px;width:1px;height:39px;background:#dddddd"></div>
<div style="position:absolute;left:564px;top:404px;width:1px;height:39px;background:#dddddd"></div>
<div style="position:absolute;left:254px;top:404px;width:475px;height:38px;overflow:hidden">
<div style="position:absolute;left:9px;top:12px;width:10px;height:10px;border:1px solid #9a9a9a;border-radius:2px;background:linear-gradient(#fdfdfd,#e6e6e6)"></div>
<svg style="position:absolute;left:42px;top:13px;" width="7" height="10" viewBox="0 0 7 10"><polygon points="0.8,0.5 5.8,4.8 0.8,9.1" fill="#111"/></svg>
<div style="position:absolute;left:69.19999999999999px;top:10.65px;font-size:14px;line-height:14px;color:#3f78b6;font-weight:normal;white-space:nowrap;font-family:'Liberation Sans',sans-serif;letter-spacing:0.350px;">Addison</div>
<div style="position:absolute;left:319.20000000000005px;top:10.65px;font-size:14px;line-height:14px;color:#222;font-weight:normal;white-space:nowrap;font-family:'Liberation Sans',sans-serif;transform:scaleX(0.8897);transform-origin:0 0;">ADS</div>
</div>
<div style="position:absolute;left:254px;top:443px;width:475px;height:38px;background:#f9f9f9"></div>
<div style="position:absolute;left:254px;top:481px;width:475px;height:1px;background:#dddddd"></div>
<div style="position:absolute;left:284px;top:443px;width:1px;height:39px;background:#dddddd"></div>
<div style="position:absolute;left:314px;top:443px;width:1px;height:39px;background:#dddddd"></div>
<div style="position:absolute;left:564px;top:443px;width:1px;height:39px;background:#dddddd"></div>
<div style="position:absolute;left:254px;top:443px;width:475px;height:38px;overflow:hidden">
<div style="position:absolute;left:9px;top:12px;width:10px;height:10px;border:1px solid #9a9a9a;border-radius:2px;background:linear-gradient(#fdfdfd,#e6e6e6)"></div>
<svg style="position:absolute;left:42px;top:13px;" width="7" height="10" viewBox="0 0 7 10"><polygon points="0.8,0.5 5.8,4.8 0.8,9.1" fill="#111"/></svg>
<div style="position:absolute;left:69.19999999999999px;top:10.65px;font-size:14px;line-height:14px;color:#3f78b6;font-weight:normal;white-space:nowrap;font-family:'Liberation Sans',sans-serif;letter-spacing:0.493px;">Aden Adde International Airport</div>
<div style="position:absolute;left:319.20000000000005px;top:10.65px;font-size:14px;line-height:14px;color:#222;font-weight:normal;white-space:nowrap;font-family:'Liberation Sans',sans-serif;transform:scaleX(0.9618);transform-origin:0 0;">MGQ</div>
</div>
<div style="position:absolute;left:254px;top:482px;width:475px;height:38px;background:#fff"></div>
<div style="position:absolute;left:254px;top:520px;width:475px;height:1px;background:#dddddd"></div>
<div style="position:absolute;left:284px;top:482px;width:1px;height:39px;background:#dddddd"></div>
<div style="position:absolute;left:314px;top:482px;width:1px;height:39px;background:#dddddd"></div>
<div style="position:absolute;left:564px;top:482px;width:1px;height:39px;background:#dddddd"></div>
<div style="position:absolute;left:254px;top:482px;width:475px;height:38px;overflow:hidden">
<div style="position:absolute;left:9px;top:12px;width:10px;height:10px;border:1px solid #9a9a9a;border-radius:2px;background:linear-gradient(#fdfdfd,#e6e6e6)"></div>
<svg style="position:absolute;left:42px;top:13px;" width="7" height="10" viewBox="0 0 7 10"><polygon points="0.8,0.5 5.8,4.8 0.8,9.1" fill="#111"/></svg>
<div style="position:absolute;left:69.19999999999999px;top:10.65px;font-size:14px;line-height:14px;color:#3f78b6;font-weight:normal;white-space:nowrap;font-family:'Liberation Sans',sans-serif;letter-spacing:0.350px;">Adirondack Regional Airport</div>
<div style="position:absolute;left:319.20000000000005px;top:10.65px;font-size:14px;line-height:14px;color:#222;font-weight:normal;white-space:nowrap;font-family:'Liberation Sans',sans-serif;transform:scaleX(0.8444);transform-origin:0 0;">SLK</div>
</div>
<div style="position:absolute;left:254px;top:521px;width:475px;height:38px;background:#f9f9f9"></div>
<div style="position:absolute;left:254px;top:559px;width:475px;height:1px;background:#dddddd"></div>
<div style="position:absolute;left:284px;top:521px;width:1px;height:39px;background:#dddddd"></div>
<div style="position:absolute;left:314px;top:521px;width:1px;height:39px;background:#dddddd"></div>
<div style="position:absolute;left:564px;top:521px;width:1px;height:39px;background:#dddddd"></div>
<div style="position:absolute;left:254px;top:521px;width:475px;height:38px;overflow:hidden">
<div style="position:absolute;left:9px;top:12px;width:10px;height:10px;border:1px solid #9a9a9a;border-radius:2px;background:linear-gradient(#fdfdfd,#e6e6e6)"></div>
<svg style="position:absolute;left:42px;top:13px;" width="7" height="10" viewBox="0 0 7 10"><polygon points="0.8,0.5 5.8,4.8 0.8,9.1" fill="#111"/></svg>
<div style="position:absolute;left:69.19999999999999px;top:10.65px;font-size:14px;line-height:14px;color:#3f78b6;font-weight:normal;white-space:nowrap;font-family:'Liberation Sans',sans-serif;letter-spacing:0.358px;">Aeroporto Estadual Arthur Siqueira</div>
<div style="position:absolute;left:319.20000000000005px;top:10.65px;font-size:14px;line-height:14px;color:#222;font-weight:normal;white-space:nowrap;font-family:'Liberation Sans',sans-serif;transform:scaleX(0.8077);transform-origin:0 0;">BJP</div>
</div>
<div style="position:absolute;left:254px;top:560px;width:475px;height:38px;background:#fff"></div>
<div style="position:absolute;left:254px;top:598px;width:475px;height:1px;background:#dddddd"></div>
<div style="position:absolute;left:284px;top:560px;width:1px;height:39px;background:#dddddd"></div>
<div style="position:absolute;left:314px;top:560px;width:1px;height:39px;background:#dddddd"></div>
<div style="position:absolute;left:564px;top:560px;width:1px;height:39px;background:#dddddd"></div>
<div style="position:absolute;left:254px;top:560px;width:475px;height:38px;overflow:hidden">
<div style="position:absolute;left:9px;top:12px;width:10px;height:10px;border:1px solid #9a9a9a;border-radius:2px;background:linear-gradient(#fdfdfd,#e6e6e6)"></div>
<svg style="position:absolute;left:42px;top:13px;" width="7" height="10" viewBox="0 0 7 10"><polygon points="0.8,0.5 5.8,4.8 0.8,9.1" fill="#111"/></svg>
<div style="position:absolute;left:69.19999999999999px;top:10.65px;font-size:14px;line-height:14px;color:#3f78b6;font-weight:normal;white-space:nowrap;font-family:'Liberation Sans',sans-serif;letter-spacing:0.303px;">Aeroporto Prefeito Octavio de Al...</div>
<div style="position:absolute;left:319.20000000000005px;top:10.65px;font-size:14px;line-height:14px;color:#222;font-weight:normal;white-space:nowrap;font-family:'Liberation Sans',sans-serif;transform:scaleX(0.8074);transform-origin:0 0;">JDR</div>
</div>
<div style="position:absolute;left:254px;top:599px;width:475px;height:38px;background:#f9f9f9"></div>
<div style="position:absolute;left:254px;top:637px;width:475px;height:1px;background:#dddddd"></div>
<div style="position:absolute;left:284px;top:599px;width:1px;height:39px;background:#dddddd"></div>
<div style="position:absolute;left:314px;top:599px;width:1px;height:39px;background:#dddddd"></div>
<div style="position:absolute;left:564px;top:599px;width:1px;height:39px;background:#dddddd"></div>
<div style="position:absolute;left:254px;top:599px;width:475px;height:38px;overflow:hidden">
<div style="position:absolute;left:9px;top:12px;width:10px;height:10px;border:1px solid #9a9a9a;border-radius:2px;background:linear-gradient(#fdfdfd,#e6e6e6)"></div>
<svg style="position:absolute;left:42px;top:13px;" width="7" height="10" viewBox="0 0 7 10"><polygon points="0.8,0.5 5.8,4.8 0.8,9.1" fill="#111"/></svg>
<div style="position:absolute;left:69.19999999999999px;top:10.65px;font-size:14px;line-height:14px;color:#3f78b6;font-weight:normal;white-space:nowrap;font-family:'Liberation Sans',sans-serif;letter-spacing:0.614px;">Aerotortuguero Airport</div>
<div style="position:absolute;left:319.20000000000005px;top:10.65px;font-size:14px;line-height:14px;color:#222;font-weight:normal;white-space:nowrap;font-family:'Liberation Sans',sans-serif;transform:scaleX(0.9143);transform-origin:0 0;">TTQ</div>
</div>
<div style="position:absolute;left:254px;top:638px;width:475px;height:38px;background:#fff"></div>
<div style="position:absolute;left:254px;top:676px;width:475px;height:1px;background:#dddddd"></div>
<div style="position:absolute;left:284px;top:638px;width:1px;height:39px;background:#dddddd"></div>
<div style="position:absolute;left:314px;top:638px;width:1px;height:39px;background:#dddddd"></div>
<div style="position:absolute;left:564px;top:638px;width:1px;height:39px;background:#dddddd"></div>
<div style="position:absolute;left:254px;top:638px;width:475px;height:38px;overflow:hidden">
<div style="position:absolute;left:9px;top:12px;width:10px;height:10px;border:1px solid #9a9a9a;border-radius:2px;background:linear-gradient(#fdfdfd,#e6e6e6)"></div>
<svg style="position:absolute;left:42px;top:13px;" width="7" height="10" viewBox="0 0 7 10"><polygon points="0.8,0.5 5.8,4.8 0.8,9.1" fill="#111"/></svg>
<div style="position:absolute;left:69.19999999999999px;top:10.65px;font-size:14px;line-height:14px;color:#3f78b6;font-weight:normal;white-space:nowrap;font-family:'Liberation Sans',sans-serif;letter-spacing:0.229px;">Agartala</div>
<div style="position:absolute;left:319.20000000000005px;top:10.65px;font-size:14px;line-height:14px;color:#222;font-weight:normal;white-space:nowrap;font-family:'Liberation Sans',sans-serif;transform:scaleX(0.8870);transform-origin:0 0;">IXA</div>
</div>
<div style="position:absolute;left:254px;top:677px;width:475px;height:38px;background:#f9f9f9"></div>
<div style="position:absolute;left:254px;top:715px;width:475px;height:1px;background:#dddddd"></div>
<div style="position:absolute;left:284px;top:677px;width:1px;height:39px;background:#dddddd"></div>
<div style="position:absolute;left:314px;top:677px;width:1px;height:39px;background:#dddddd"></div>
<div style="position:absolute;left:564px;top:677px;width:1px;height:39px;background:#dddddd"></div>
<div style="position:absolute;left:254px;top:677px;width:475px;height:38px;overflow:hidden">
<div style="position:absolute;left:9px;top:12px;width:10px;height:10px;border:1px solid #9a9a9a;border-radius:2px;background:linear-gradient(#fdfdfd,#e6e6e6)"></div>
<svg style="position:absolute;left:42px;top:13px;" width="7" height="10" viewBox="0 0 7 10"><polygon points="0.8,0.5 5.8,4.8 0.8,9.1" fill="#111"/></svg>
<div style="position:absolute;left:69.19999999999999px;top:10.65px;font-size:14px;line-height:14px;color:#3f78b6;font-weight:normal;white-space:nowrap;font-family:'Liberation Sans',sans-serif;letter-spacing:0.029px;">Aggeneys</div>
<div style="position:absolute;left:319.20000000000005px;top:10.65px;font-size:14px;line-height:14px;color:#222;font-weight:normal;white-space:nowrap;font-family:'Liberation Sans',sans-serif;transform:scaleX(0.9034);transform-origin:0 0;">AGZ</div>
</div>
<div style="position:absolute;left:254px;top:716px;width:475px;height:38px;background:#fff"></div>
<div style="position:absolute;left:254px;top:754px;width:475px;height:1px;background:#dddddd"></div>
<div style="position:absolute;left:284px;top:716px;width:1px;height:39px;background:#dddddd"></div>
<div style="position:absolute;left:314px;top:716px;width:1px;height:39px;background:#dddddd"></div>
<div style="position:absolute;left:564px;top:716px;width:1px;height:39px;background:#dddddd"></div>
<div style="position:absolute;left:254px;top:716px;width:475px;height:38px;overflow:hidden">
<div style="position:absolute;left:9px;top:12px;width:10px;height:10px;border:1px solid #9a9a9a;border-radius:2px;background:linear-gradient(#fdfdfd,#e6e6e6)"></div>
<svg style="position:absolute;left:42px;top:13px;" width="7" height="10" viewBox="0 0 7 10"><polygon points="0.8,0.5 5.8,4.8 0.8,9.1" fill="#111"/></svg>
<div style="position:absolute;left:69.19999999999999px;top:10.65px;font-size:14px;line-height:14px;color:#3f78b6;font-weight:normal;white-space:nowrap;font-family:'Liberation Sans',sans-serif;letter-spacing:0.509px;">Agri Airport</div>
<div style="position:absolute;left:319.20000000000005px;top:10.65px;font-size:14px;line-height:14px;color:#222;font-weight:normal;white-space:nowrap;font-family:'Liberation Sans',sans-serif;transform:scaleX(0.7750);transform-origin:0 0;">AJI</div>
</div>
<div style="position:absolute;left:254px;top:755px;width:475px;height:38px;background:#f9f9f9"></div>
<div style="position:absolute;left:254px;top:793px;width:475px;height:1px;background:#dddddd"></div>
<div style="position:absolute;left:284px;top:755px;width:1px;height:39px;background:#dddddd"></div>
<div style="position:absolute;left:314px;top:755px;width:1px;height:39px;background:#dddddd"></div>
<div style="position:absolute;left:564px;top:755px;width:1px;height:39px;background:#dddddd"></div>
<div style="position:absolute;left:254px;top:755px;width:475px;height:38px;overflow:hidden">
<div style="position:absolute;left:9px;top:12px;width:10px;height:10px;border:1px solid #9a9a9a;border-radius:2px;background:linear-gradient(#fdfdfd,#e6e6e6)"></div>
<svg style="position:absolute;left:42px;top:13px;" width="7" height="10" viewBox="0 0 7 10"><polygon points="0.8,0.5 5.8,4.8 0.8,9.1" fill="#111"/></svg>
<div style="position:absolute;left:69.19999999999999px;top:10.65px;font-size:14px;line-height:14px;color:#3f78b6;font-weight:normal;white-space:nowrap;font-family:'Liberation Sans',sans-serif;letter-spacing:0.375px;">Aiome</div>
<div style="position:absolute;left:319.20000000000005px;top:10.65px;font-size:14px;line-height:14px;color:#222;font-weight:normal;white-space:nowrap;font-family:'Liberation Sans',sans-serif;transform:scaleX(0.8870);transform-origin:0 0;">AIE</div>
</div>
<div style="position:absolute;left:254px;top:794px;width:475px;height:14px;background:#fff"></div>
<div style="position:absolute;left:284px;top:794px;width:1px;height:14px;background:#dddddd"></div>
<div style="position:absolute;left:314px;top:794px;width:1px;height:14px;background:#dddddd"></div>
<div style="position:absolute;left:564px;top:794px;width:1px;height:14px;background:#dddddd"></div>
<div style="position:absolute;left:254px;top:794px;width:475px;height:14px;overflow:hidden">
<div style="position:absolute;left:9px;top:12px;width:10px;height:10px;border:1px solid #9a9a9a;border-radius:2px;background:linear-gradient(#fdfdfd,#e6e6e6)"></div>
<svg style="position:absolute;left:42px;top:13px;" width="7" height="10" viewBox="0 0 7 10"><polygon points="0.8,0.5 5.8,4.8 0.8,9.1" fill="#111"/></svg>
<div style="position:absolute;left:69.19999999999999px;top:10.65px;font-size:14px;line-height:14px;color:#3f78b6;font-weight:normal;white-space:nowrap;font-family:'Liberation Sans',sans-serif;letter-spacing:3.073px;">Akure El Haa</div>
<div style="position:absolute;left:319.20000000000005px;top:10.65px;font-size:14px;line-height:14px;color:#222;font-weight:normal;white-space:nowrap;font-family:'Liberation Sans',sans-serif;letter-spacing:-0.100px;">IEC</div>
</div>
<div style="position:absolute;left:729px;top:224px;width:17px;height:584px;background:#f1f1f1"></div>
<svg style="position:absolute;left:733px;top:229px;" width="9" height="6" viewBox="0 0 9 6"><polygon points="0.5,5.5 4.5,0.5 8.5,5.5" fill="#a3a3a3"/></svg>
<div style="position:absolute;left:731px;top:241px;width:13px;height:81px;background:#c1c1c1"></div>
<svg style="position:absolute;left:733px;top:795px;" width="9" height="6" viewBox="0 0 9 6"><polygon points="0.5,0.5 4.5,5.5 8.5,0.5" fill="#505050"/></svg>
<div style="position:absolute;left:254px;top:808px;width:475px;height:17px;background:#f1f1f1"></div>
<svg style="position:absolute;left:258px;top:812px;" width="6" height="9" viewBox="0 0 6 9"><polygon points="5.5,0.5 0.5,4.5 5.5,8.5" fill="#a3a3a3"/></svg>
<div style="position:absolute;left:271px;top:810px;width:373px;height:13px;background:#c1c1c1"></div>
<svg style="position:absolute;left:718px;top:812px;" width="6" height="9" viewBox="0 0 6 9"><polygon points="0.5,0.5 5.5,4.5 0.5,8.5" fill="#505050"/></svg>
<div style="position:absolute;left:729px;top:808px;width:17px;height:17px;background:#dcdcdc"></div>
<div style="position:absolute;left:254px;top:825px;width:492px;height:9px;background:#f0f0f0;border-top:1px solid #d5d5d5;box-sizing:border-box"></div>
<div style="position:absolute;left:255px;top:829px;width:136px;height:14px;background:#fff;border:1px solid #ccc;border-radius:4px;"></div>
<div style="position:absolute;left:290px;top:830px;width:1px;height:6px;background:#ccc"></div>
<div style="position:absolute;left:323px;top:830px;width:1px;height:6px;background:#ccc"></div>
<div style="position:absolute;left:356px;top:830px;width:1px;height:6px;background:#ccc"></div>
<div style="position:absolute;left:572px;top:829px;width:48px;height:14px;background:#fff;border:1px solid #ccc;border-radius:4px;"></div>
<div style="position:absolute;left:627px;top:829px;width:116px;height:14px;background:#fff;border:1px solid #ccc;border-radius:4px;"></div>
<svg style="position:absolute;left:1371.5px;top:84px;" width="9.5" height="9.5" viewBox="0 0 9.5 9.5"><path d="M0.5 0.5 L9.0 9.0 M9.0 0.5 L0.5 9.0" stroke="#888" stroke-width="0.95"/></svg>
<div style="position:absolute;left:752px;top:80px;width:78px;height:20px;background:#e3e3e3;border:1px solid #cfcfcf;border-bottom:none;box-sizing:border-box"></div>
<div style="position:absolute;left:763px;top:83.64px;font-size:12px;line-height:12px;color:#6a6a6a;font-weight:normal;white-space:nowrap;font-family:'Liberation Sans',sans-serif;letter-spacing:0.000px;">Airports</div>
<svg style="position:absolute;left:813px;top:87px;" width="7.5" height="7.5" viewBox="0 0 7.5 7.5"><path d="M0.5 0.5 L7.0 7.0 M7.0 0.5 L0.5 7.0" stroke="#333" stroke-width="1.1"/></svg>
<div style="position:absolute;left:752px;top:99px;width:638px;height:735px;border-left:1px solid #c9c9c9;border-right:1px solid #c9c9c9;box-sizing:border-box"></div>
<div style="position:absolute;left:753px;top:99px;width:636px;height:41px;background:#f0f0f0;border-top:1px solid #c9c9c9;border-bottom:1px solid #c9c9c9;box-sizing:border-box"></div>
<div style="position:absolute;left:756.4px;top:103px;width:28.600000000000023px;height:32px;background:#fff;border:1px solid #ccc;border-radius:4px;"></div>
<svg style="position:absolute;left:767px;top:112px;" width="8" height="16" viewBox="0 0 8 16"><g fill="#222"><circle cx="4" cy="2.3" r="2"/><circle cx="4" cy="8" r="2"/><circle cx="4" cy="13.7" r="2"/></g></svg>
<div style="position:absolute;left:792.5px;top:103px;width:84.5px;height:32px;background:#fff;border:1px solid #ccc;border-radius:4px;"></div>
<div style="position:absolute;left:805px;top:112.73px;font-size:14.5px;line-height:14.5px;color:#333;font-weight:normal;white-space:nowrap;font-family:'Liberation Sans',sans-serif;letter-spacing:0.000px;">Explore</div>
<svg style="position:absolute;left:858px;top:119px;" width="9" height="6" viewBox="0 0 9 6"><polygon points="0,0.5 9,0.5 4.5,5" fill="#222"/></svg>
<div style="position:absolute;left:884.4px;top:103px;width:80.60000000000002px;height:32px;background:#fff;border:1px solid #ccc;border-radius:4px;"></div>
<div style="position:absolute;left:897.3px;top:112.73px;font-size:14.5px;line-height:14.5px;color:#333;font-weight:normal;white-space:nowrap;font-family:'Liberation Sans',sans-serif;letter-spacing:0.240px;">Modify</div>
<svg style="position:absolute;left:946.5px;top:119px;" width="9" height="6" viewBox="0 0 9 6"><polygon points="0,0.5 9,0.5 4.5,5" fill="#222"/></svg>
<div style="position:absolute;left:972.2px;top:103px;width:259px;height:32px;border:1px solid #ccc;border-radius:4px;background:#eee"></div>
<div style="position:absolute;left:973.2px;top:104px;width:67.4px;height:32px;background:#fff;border-radius:3px 0 0 3px"></div>
<div style="position:absolute;left:1040.6px;top:104px;width:1px;height:32px;background:#ccc"></div>
<div style="position:absolute;left:1116.6px;top:104px;width:1px;height:32px;background:#ccc"></div>
<div style="position:absolute;left:985.3px;top:112.73px;font-size:14.5px;line-height:14.5px;color:#333;font-weight:normal;white-space:nowrap;font-family:'Liberation Sans',sans-serif;transform:scaleX(0.9378);transform-origin:0 0;">Cancel</div>
<div style="position:absolute;left:1053.7px;top:112.73px;font-size:14.5px;line-height:14.5px;color:#b5b5b5;font-weight:normal;white-space:nowrap;font-family:'Liberation Sans',sans-serif;letter-spacing:-0.283px;">Preview</div>
<div style="position:absolute;left:1129.8px;top:112.73px;font-size:14.5px;line-height:14.5px;color:#b5b5b5;font-weight:normal;white-space:nowrap;font-family:'Liberation Sans',sans-serif;transform:scaleX(0.9368);transform-origin:0 0;">Save Changes</div>
<div style="position:absolute;left:1332px;top:103px;width:52px;height:32px;background:#fff;border:1px solid #ccc;border-radius:4px;"></div>
<svg style="position:absolute;left:1348px;top:112px;" width="26" height="16" viewBox="0 0 26 16"><g fill="#222"><circle cx="8" cy="8" r="5.2"/><g stroke="#222" stroke-width="3.4"><line x1="8" y1="1.3" x2="8" y2="14.7"/><line x1="2.2" y1="4.65" x2="13.8" y2="11.35"/><line x1="13.8" y1="4.65" x2="2.2" y2="11.35"/></g></g><circle cx="8" cy="8" r="2" fill="#fff"/><polygon points="16.5,6.5 25,6.5 20.75,11" fill="#222"/></svg>
<div style="position:absolute;left:1372px;top:140px;width:17px;height:694px;background:#f1f1f1"></div>
<svg style="position:absolute;left:1376px;top:146px;" width="9" height="6" viewBox="0 0 9 6"><polygon points="0.5,5.5 4.5,0.5 8.5,5.5" fill="#a3a3a3"/></svg>
<div style="position:absolute;left:1374px;top:157px;width:13px;height:319px;background:#c1c1c1"></div>
<svg style="position:absolute;left:761px;top:149px;" width="41" height="33" viewBox="0 0 41 33"><g fill="#1c3f8f"><rect x="29" y="1" width="5.1" height="11"/><polygon points="7.2,19.3 20.4,9 33.9,19.3 33.9,31.7 24,31.7 24,22.9 16.8,22.9 16.8,31.7 7.2,31.7"/></g><polyline points="1.5,18.3 20.4,3.9 39,18.3" fill="none" stroke="#1c3f8f" stroke-width="4.6" stroke-linejoin="round"/></svg>
<div style="position:absolute;left:822.2px;top:148.87px;font-size:20px;line-height:20px;color:#1c3f8f;font-weight:bold;white-space:nowrap;font-family:'Liberation Sans',sans-serif;letter-spacing:0.443px;">Airports</div>
<div style="position:absolute;left:822.5px;top:173.24px;font-size:12px;line-height:12px;color:#777;font-weight:normal;white-space:nowrap;font-family:'Liberation Sans',sans-serif;">URI</div>
<div style="position:absolute;left:848.2px;top:172.82px;font-size:12.5px;line-height:12.5px;color:#777;font-weight:normal;white-space:nowrap;font-family:'Liberation Sans',sans-serif;letter-spacing:0.112px;">urn:x-evn-master:airports</div>
<svg style="position:absolute;left:1007px;top:172px;" width="12" height="11" viewBox="0 0 12 11"><g fill="#666"><rect x="4" y="1" width="8" height="1.8"/><rect x="4" y="4.7" width="8" height="1.8"/><rect x="4" y="8.4" width="8" height="1.8"/></g><path d="M0.5 1.8 L1.5 2.8 L3.2 0.6 M0.5 5.5 L1.5 6.5 L3.2 4.3" fill="none" stroke="#666" stroke-width="0.9"/><circle cx="1.7" cy="9.3" r="0.9" fill="#666"/></svg>
<div style="position:absolute;left:1022.2px;top:172.82px;font-size:12.5px;line-height:12.5px;color:#666;font-weight:normal;white-space:nowrap;font-family:'Liberation Sans',sans-serif;transform:scaleX(0.9442);transform-origin:0 0;text-decoration:underline;">2 Tasks</div>
<svg style="position:absolute;left:762.8px;top:220.0px;" width="6" height="9" viewBox="0 0 6 9"><polygon points="0.5,0.5 5.3,4.5 0.5,8.5" fill="#111"/></svg>
<div style="position:absolute;left:778px;top:217.76px;font-size:16px;line-height:16px;color:#1a3e8c;font-weight:bold;white-space:nowrap;font-family:'Liberation Sans',sans-serif;letter-spacing:0.343px;">Overview</div>
<svg style="position:absolute;left:762.8px;top:256.0px;" width="6" height="9" viewBox="0 0 6 9"><polygon points="0.5,0.5 5.3,4.5 0.5,8.5" fill="#111"/></svg>
<div style="position:absolute;left:778px;top:253.76px;font-size:16px;line-height:16px;color:#1a3e8c;font-weight:bold;white-space:nowrap;font-family:'Liberation Sans',sans-serif;letter-spacing:0.230px;">Description</div>
<svg style="position:absolute;left:761px;top:293.4px;" width="9" height="6" viewBox="0 0 9 6"><polygon points="0.5,0.5 8.5,0.5 4.5,5.5" fill="#111"/></svg>
<div style="position:absolute;left:778px;top:289.66px;font-size:16px;line-height:16px;color:#1a3e8c;font-weight:bold;white-space:nowrap;font-family:'Liberation Sans',sans-serif;letter-spacing:0.100px;">Status</div>
<div style="position:absolute;left:753px;top:314px;width:619px;height:1px;background:#dedede"></div>
<div style="position:absolute;left:753px;top:315px;width:619px;height:291px;background:linear-gradient(#f9f9f9 0,#f9f9f9 92.5%,#fff 100%)"></div>
<div style="position:absolute;left:769.1px;top:333.15px;font-size:14px;line-height:14px;color:#111;font-weight:bold;white-space:nowrap;font-family:'Liberation Sans',sans-serif;letter-spacing:0.217px;">status:</div>
<div style="position:absolute;left:962px;top:323.5px;width:177px;height:31.0px;background:#fff;border:1px solid #ccc;border-radius:4px;"></div>
<div style="position:absolute;left:979.3px;top:333.63px;font-size:14.5px;line-height:14.5px;color:#555;font-weight:normal;white-space:nowrap;font-family:'Liberation Sans',sans-serif;letter-spacing:0.138px;">Under development</div>
<svg style="position:absolute;left:1128px;top:337.5px;" width="7" height="6" viewBox="0 0 7 6"><polygon points="0.3,0.5 6.7,0.5 3.5,5.5" fill="#444"/></svg>
<svg style="position:absolute;left:1334.0px;top:337px;" width="9" height="6" viewBox="0 0 9 6"><path d="M1 1 L4.5 4.5 L8 1" fill="none" stroke="#111" stroke-width="1.9"/></svg>
<svg style="position:absolute;left:1350px;top:333px;" width="14" height="14" viewBox="0 0 14 14"><circle cx="7" cy="7" r="6.7" fill="#000"/><rect x="3" y="5.8" width="8" height="2.5" fill="#fff"/></svg>
<div style="position:absolute;left:769.1px;top:384.85px;font-size:14px;line-height:14px;color:#111;font-weight:bold;white-space:nowrap;font-family:'Liberation Sans',sans-serif;letter-spacing:0.254px;">is enterprise:</div>
<div style="position:absolute;left:962px;top:375.2px;width:77px;height:31.0px;background:#fff;border:1px solid #ccc;border-radius:4px;"></div>
<div style="position:absolute;left:979.3px;top:385.33px;font-size:14.5px;line-height:14.5px;color:#555;font-weight:normal;white-space:nowrap;font-family:'Liberation Sans',sans-serif;letter-spacing:0.567px;">true</div>
<svg style="position:absolute;left:1028px;top:389.2px;" width="7" height="6" viewBox="0 0 7 6"><polygon points="0.3,0.5 6.7,0.5 3.5,5.5" fill="#444"/></svg>
<svg style="position:absolute;left:1350px;top:384.7px;" width="14" height="14" viewBox="0 0 14 14"><circle cx="7" cy="7" r="6.7" fill="#000"/><rect x="3" y="5.8" width="8" height="2.5" fill="#fff"/></svg>
<div style="position:absolute;left:769.1px;top:436.65px;font-size:14px;line-height:14px;color:#111;font-weight:bold;white-space:nowrap;font-family:'Liberation Sans',sans-serif;letter-spacing:0.490px;">effective start date:</div>
<div style="position:absolute;left:962px;top:427.0px;width:182px;height:31.0px;background:#fff;border:1px solid #ccc;border-radius:4px;"></div>
<svg style="position:absolute;left:1334.0px;top:440.5px;" width="9" height="6" viewBox="0 0 9 6"><path d="M1 1 L4.5 4.5 L8 1" fill="none" stroke="#111" stroke-width="1.9"/></svg>
<svg style="position:absolute;left:1350px;top:436.5px;" width="14" height="14" viewBox="0 0 14 14"><circle cx="7" cy="7" r="6.7" fill="#000"/><rect x="3" y="5.8" width="8" height="2.5" fill="#fff"/></svg>
<div style="position:absolute;left:769.1px;top:488.65px;font-size:14px;line-height:14px;color:#111;font-weight:bold;white-space:nowrap;font-family:'Liberation Sans',sans-serif;letter-spacing:0.406px;">effective end date:</div>
<div style="position:absolute;left:962px;top:479.0px;width:182px;height:31.0px;background:#fff;border:1px solid #ccc;border-radius:4px;"></div>
<svg style="position:absolute;left:1334.0px;top:492.5px;" width="9" height="6" viewBox="0 0 9 6"><path d="M1 1 L4.5 4.5 L8 1" fill="none" stroke="#111" stroke-width="1.9"/></svg>
<svg style="position:absolute;left:1350px;top:488.5px;" width="14" height="14" viewBox="0 0 14 14"><circle cx="7" cy="7" r="6.7" fill="#000"/><rect x="3" y="5.8" width="8" height="2.5" fill="#fff"/></svg>
<div style="position:absolute;left:769.1px;top:540.65px;font-size:14px;line-height:14px;color:#111;font-weight:bold;white-space:nowrap;font-family:'Liberation Sans',sans-serif;letter-spacing:0.411px;">is external dataset:</div>
<div style="position:absolute;left:962px;top:531.0px;width:77px;height:31.0px;background:#fff;border:1px solid #ccc;border-radius:4px;"></div>
<div style="position:absolute;left:979.3px;top:541.13px;font-size:14.5px;line-height:14.5px;color:#555;font-weight:normal;white-space:nowrap;font-family:'Liberation Sans',sans-serif;letter-spacing:0.567px;">true</div>
<svg style="position:absolute;left:1028px;top:545.0px;" width="7" height="6" viewBox="0 0 7 6"><polygon points="0.3,0.5 6.7,0.5 3.5,5.5" fill="#444"/></svg>
<svg style="position:absolute;left:1350px;top:540.5px;" width="14" height="14" viewBox="0 0 14 14"><circle cx="7" cy="7" r="6.7" fill="#000"/><rect x="3" y="5.8" width="8" height="2.5" fill="#fff"/></svg>
<svg style="position:absolute;left:762.8px;top:620.5px;" width="6" height="9" viewBox="0 0 6 9"><polygon points="0.5,0.5 5.3,4.5 0.5,8.5" fill="#111"/></svg>
<div style="position:absolute;left:778px;top:618.26px;font-size:16px;line-height:16px;color:#1a3e8c;font-weight:bold;white-space:nowrap;font-family:'Liberation Sans',sans-serif;letter-spacing:0.133px;">Procedures</div>
<svg style="position:absolute;left:761px;top:658.3px;" width="9" height="6" viewBox="0 0 9 6"><polygon points="0.5,0.5 8.5,0.5 4.5,5.5" fill="#111"/></svg>
<div style="position:absolute;left:778px;top:654.56px;font-size:16px;line-height:16px;color:#1a3e8c;font-weight:bold;white-space:nowrap;font-family:'Liberation Sans',sans-serif;letter-spacing:0.045px;">Subscription</div>
<div style="position:absolute;left:753px;top:679px;width:619px;height:1px;background:#dedede"></div>
<div style="position:absolute;left:753px;top:680px;width:619px;height:154px;background:#f9f9f9"></div>
<div style="position:absolute;left:769.1px;top:697.85px;font-size:14px;line-height:14px;color:#111;font-weight:bold;white-space:nowrap;font-family:'Liberation Sans',sans-serif;letter-spacing:0.333px;">standardized by:</div>
<div style="position:absolute;left:962px;top:688.7px;width:46px;height:31.0px;background:#fff;border:1px solid #ccc;border-radius:4px;"></div>
<svg style="position:absolute;left:997px;top:702.7px;" width="7" height="6" viewBox="0 0 7 6"><polygon points="0.3,0.5 6.7,0.5 3.5,5.5" fill="#444"/></svg>
<svg style="position:absolute;left:1334.0px;top:701.7px;" width="9" height="6" viewBox="0 0 9 6"><path d="M1 1 L4.5 4.5 L8 1" fill="none" stroke="#111" stroke-width="1.9"/></svg>
<svg style="position:absolute;left:1350px;top:697.7px;" width="14" height="14" viewBox="0 0 14 14"><circle cx="7" cy="7" r="6.7" fill="#000"/><rect x="3" y="5.8" width="8" height="2.5" fill="#fff"/></svg>
<div style="position:absolute;left:769.1px;top:749.95px;font-size:14px;line-height:14px;color:#111;font-weight:bold;white-space:nowrap;font-family:'Liberation Sans',sans-serif;letter-spacing:0.477px;">maintained by:</div>
<div style="position:absolute;left:962px;top:740.8px;width:46px;height:31.0px;background:#fff;border:1px solid #ccc;border-radius:4px;"></div>
<svg style="position:absolute;left:997px;top:754.8px;" width="7" height="6" viewBox="0 0 7 6"><polygon points="0.3,0.5 6.7,0.5 3.5,5.5" fill="#444"/></svg>
<svg style="position:absolute;left:1334.0px;top:753.8px;" width="9" height="6" viewBox="0 0 9 6"><path d="M1 1 L4.5 4.5 L8 1" fill="none" stroke="#111" stroke-width="1.9"/></svg>
<svg style="position:absolute;left:1350px;top:749.8px;" width="14" height="14" viewBox="0 0 14 14"><circle cx="7" cy="7" r="6.7" fill="#000"/><rect x="3" y="5.8" width="8" height="2.5" fill="#fff"/></svg>
<div style="position:absolute;left:758px;top:783px;width:607px;height:39px;border:3px solid #fb3c3c;box-shadow:inset 0 3px 5px rgba(0,0,0,0.25),0 2px 5px rgba(0,0,0,0.3)"></div>
<div style="position:absolute;left:769.1px;top:801.65px;font-size:14px;line-height:14px;color:#111;font-weight:bold;white-space:nowrap;font-family:'Liberation Sans',sans-serif;letter-spacing:0.258px;">sourced from:</div>
<div style="position:absolute;left:962px;top:792px;width:325px;height:31px;background:#fff;border:1px solid #ccc;border-radius:4px;"></div>
<div style="position:absolute;left:973.1px;top:801.23px;font-size:14.5px;line-height:14.5px;color:#999;font-weight:normal;white-space:nowrap;font-family:'Liberation Sans',sans-serif;letter-spacing:-0.279px;">Select Resource</div>
<div style="position:absolute;left:1260px;top:801px;width:1px;height:17px;background:#ccc"></div>
<svg style="position:absolute;left:1268px;top:806px;" width="13" height="8" viewBox="0 0 13 8"><path d="M1 1 L6.5 6.5 L12 1" fill="none" stroke="#ccc" stroke-width="1.6"/></svg>
<svg style="position:absolute;left:1313px;top:802px;" width="11" height="10" viewBox="0 0 11 10"><g fill="#111"><rect x="0" y="0" width="11" height="1.8"/><rect x="0" y="4" width="11" height="1.8"/><rect x="0" y="8" width="11" height="1.8"/></g></svg>
<svg style="position:absolute;left:1334.5px;top:805.5px;" width="9" height="6" viewBox="0 0 9 6"><path d="M1 1 L4.5 4.5 L8 1" fill="none" stroke="#111" stroke-width="1.9"/></svg>
<svg style="position:absolute;left:1350px;top:801.5px;" width="14" height="14" viewBox="0 0 14 14"><circle cx="7" cy="7" r="6.7" fill="#000"/><rect x="3" y="5.8" width="8" height="2.5" fill="#fff"/></svg>
</body></html>
